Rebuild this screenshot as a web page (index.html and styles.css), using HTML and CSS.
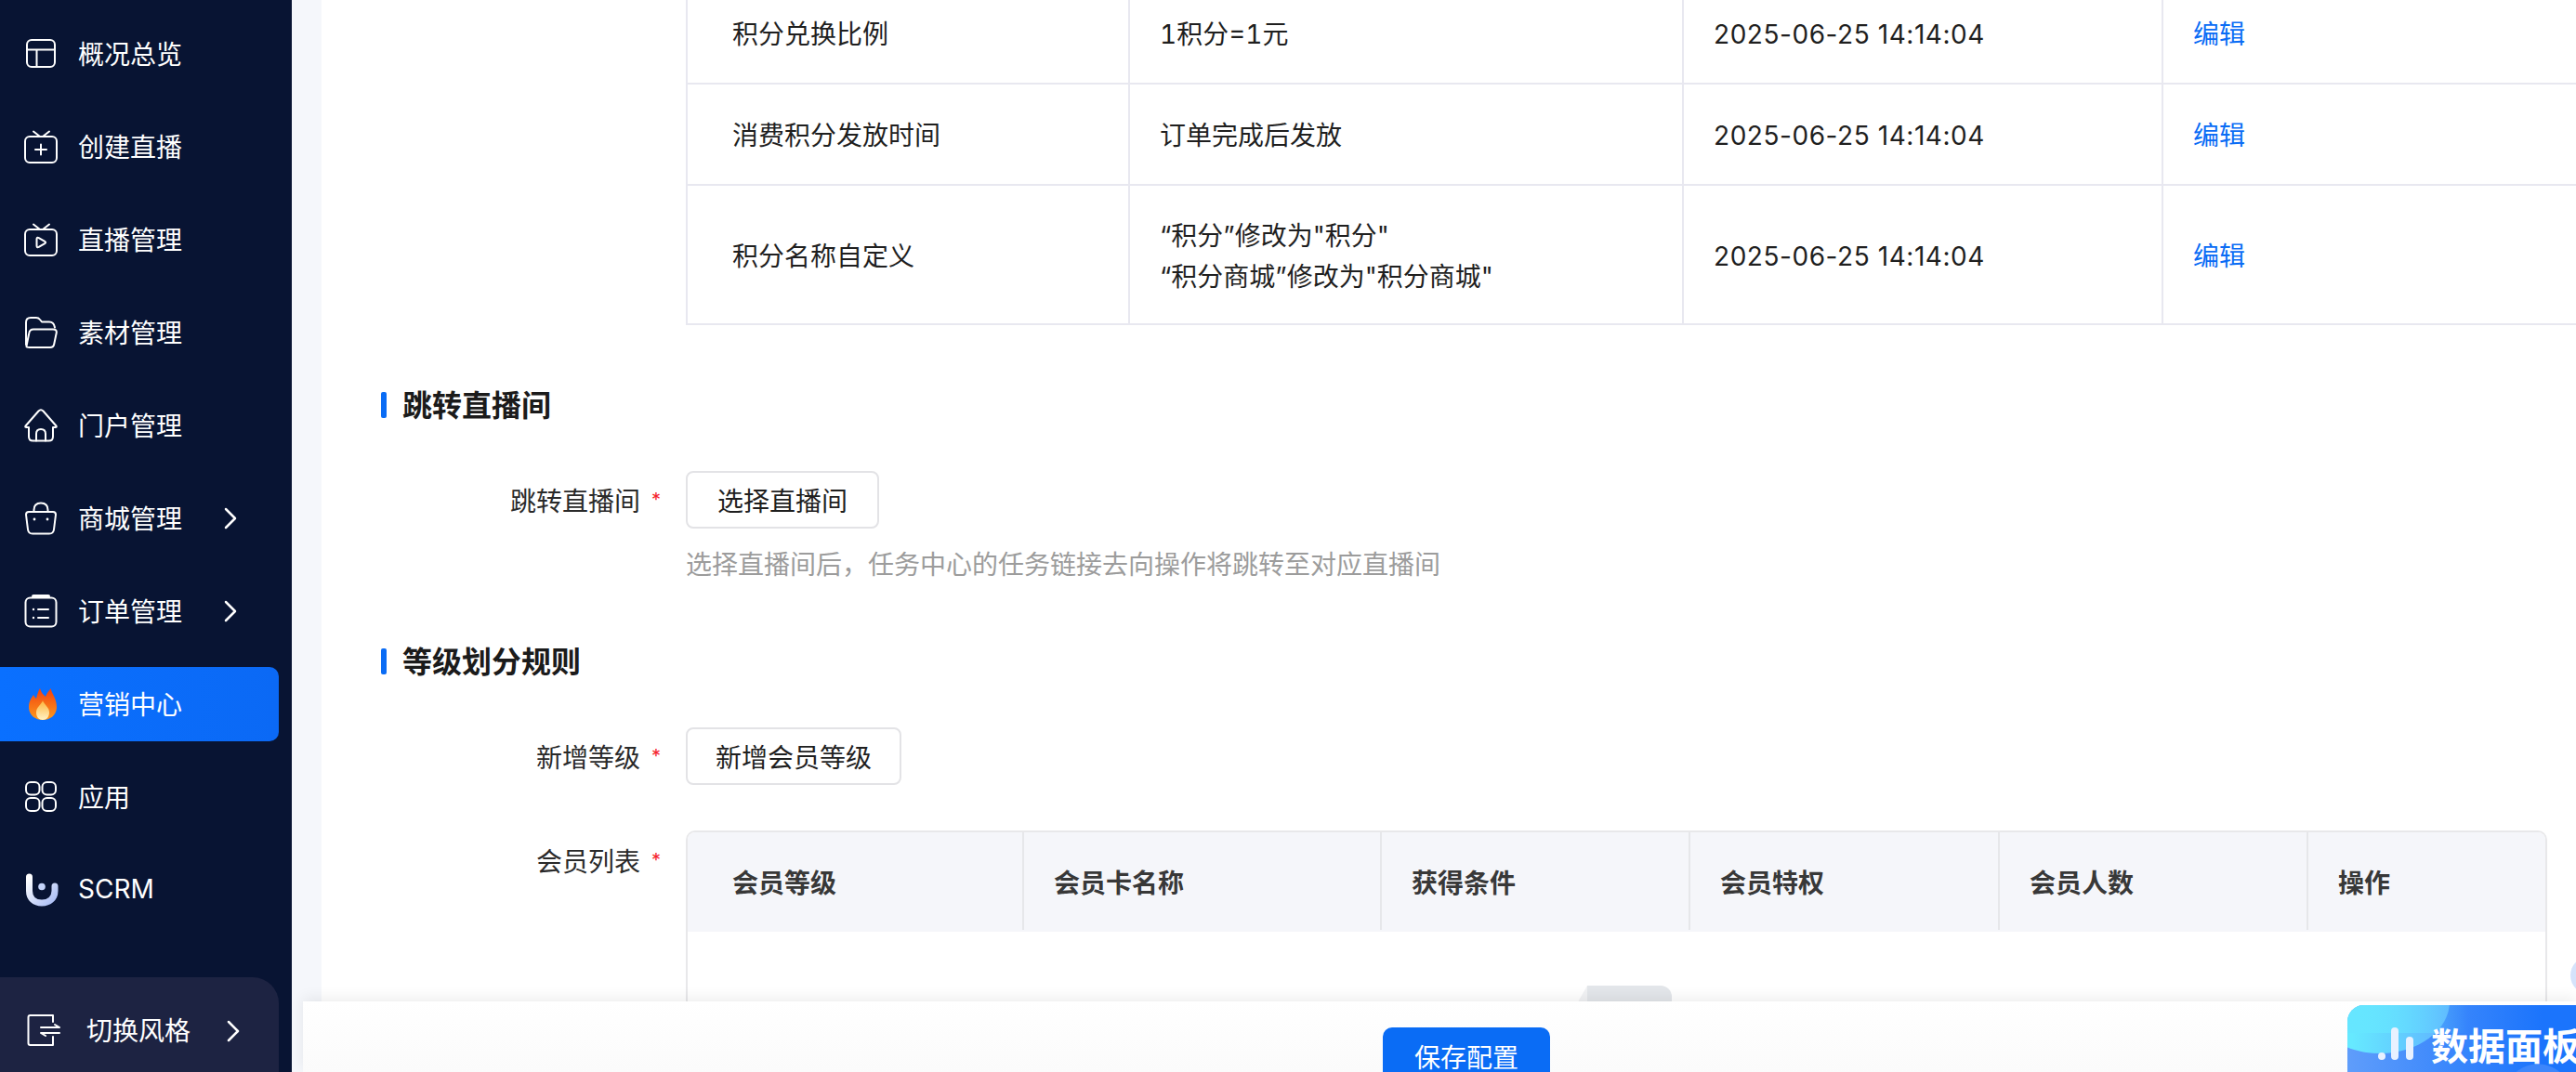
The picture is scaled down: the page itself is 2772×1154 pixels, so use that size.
FILE: index.html
```html
<!DOCTYPE html>
<html lang="zh-CN">
<head>
<meta charset="utf-8">
<title>营销中心</title>
<link rel="stylesheet" href="styles.css">
</head>
<body>
<div class="page">
  <aside class="sidebar">
    <nav class="nav">
      <a class="nav-item"><svg class="ico" viewBox="0 0 36 36"><rect x="3" y="3" width="30" height="29" rx="5"/><path d="M3 13.5h30M13.5 13.5V32"/></svg><span>概况总览</span></a>
      <a class="nav-item"><svg class="ico" viewBox="0 0 36 36"><rect x="1" y="7" width="34" height="28" rx="5"/><path d="M10 1.5l7 5.5M27 1.5l-7 5.5M12 21h12M18 15.5v11"/></svg><span>创建直播</span></a>
      <a class="nav-item"><svg class="ico" viewBox="0 0 36 36"><rect x="1" y="7" width="34" height="28" rx="5"/><path d="M10 1.5l7 5.5M27 1.5l-7 5.5"/><path d="M13.5 17.5q0-2.500 2.200-1.400l6.500 3.800q1.800 1.100 0 2.200l-6.500 3.800q-2.200 1.100-2.200-1.400z"/></svg><span>直播管理</span></a>
      <a class="nav-item"><svg class="ico" viewBox="0 0 36 36"><path d="M2 31V7q0-5 5-5h6q2.500 0 4 2l2 2.500h8q5 0 6 6"/><path d="M2.500 32.500l2.800-14q.7-4 4.700-4h21q4.500 0 3.700 4l-2.500 12q-.7 3.500-4.200 3.500H6q-4 0-3.500-1.500z"/></svg><span>素材管理</span></a>
      <a class="nav-item"><svg class="ico" viewBox="0 0 36 36"><path d="M1.500 18.500L15.500 2.500q2.500-2.500 5 0l14 16q.8 1.500-1 1.500H31v10q0 4.500-4.500 4.500h-17Q5 34.500 5 30V20H2.500q-1.800 0-1-1.500z"/><path d="M13 34.500V27q0-5 5-5t5 5v7.500"/></svg><span>门户管理</span></a>
      <a class="nav-item"><svg class="ico" viewBox="0 0 36 36"><path d="M5 11h26q3 0 3 3l-2 16q-.5 4.500-5 4.500H9q-4.500 0-5-4.500L2 14q0-3 3-3z"/><path d="M10.500 11V9q0-7.500 7.500-7.500T25.500 9v2"/><circle class="dot" cx="11" cy="19" r="1.400"/><circle class="dot" cx="25" cy="19" r="1.400"/></svg><span>商城管理</span><svg class="chev" viewBox="0 0 14 24"><path d="M2 2l10 10L2 22"/></svg></a>
      <a class="nav-item"><svg class="ico" viewBox="0 0 36 36"><rect x="1.500" y="3.500" width="33" height="31" rx="5"/><path class="clip" d="M10 2h16"/><path d="M15 16h11M15 25h11"/><circle class="dot" cx="10" cy="16" r="1.200"/><circle class="dot" cx="10" cy="25" r="1.200"/></svg><span>订单管理</span><svg class="chev" viewBox="0 0 14 24"><path d="M2 2l10 10L2 22"/></svg></a>
      <a class="nav-item nav-active"><svg class="flame" viewBox="0 0 36 36"><defs><linearGradient id="fl1" x1="0" y1="0" x2="0" y2="1"><stop offset="0" stop-color="#f2400f"/><stop offset="1" stop-color="#fb9a1e"/></linearGradient><linearGradient id="fl2" x1="0" y1="0" x2="0" y2="1"><stop offset="0" stop-color="#fdb43a"/><stop offset="1" stop-color="#fff2c4"/></linearGradient></defs><path fill="url(#fl1)" d="M15 1c2 6 4 7 6 9 1-3 3-6 6-9-1 4 6 10 6 20 0 9-7 14-15 14S3 30 3 21C3 15 6 11 8 8c1 2 2 3 3 4 1-4 2-8 4-11z"/><path fill="url(#fl2)" d="M18 14c1 4 7 7 7 13 0 5-3 8-7 8s-7-3-7-8c0-6 6-9 7-13z"/></svg><span>营销中心</span></a>
      <a class="nav-item"><svg class="ico" viewBox="0 0 36 36"><rect x="2" y="2" width="14.500" height="13.500" rx="5"/><rect x="19.500" y="2" width="14.500" height="13.500" rx="5"/><rect x="2" y="19" width="14.500" height="14" rx="5"/><rect x="19.500" y="19" width="14.500" height="14" rx="5"/></svg><span>应用</span></a>
      <a class="nav-item"><svg class="logo" viewBox="0 0 36 36"><defs><linearGradient id="ug" x1="0" y1="0" x2="1" y2="1"><stop offset="0" stop-color="#ffffff"/><stop offset="1" stop-color="#a9bdf5"/></linearGradient></defs><path fill="none" stroke="url(#ug)" stroke-width="7" stroke-linecap="round" d="M4.500 4v15c0 8 5.500 13 13.500 13s14-5 14-13v-5"/><circle cx="18" cy="14.500" r="3.800" fill="#c4d4fa"/></svg><span>SCRM</span></a>
    </nav>
    <div class="switch">
      <svg class="ico" viewBox="0 0 36 36"><path d="M28 2H3.500Q1.500 2 1.500 4v28q0 2 2 2H28v-9M28 2v7"/><path d="M15 15h20l-5-3M35 21H15l5 3"/></svg>
      <span>切换风格</span>
      <svg class="chev" viewBox="0 0 14 24"><path d="M2 2l10 10L2 22"/></svg>
    </div>
  </aside>

  <main class="main">
    <div class="content">
      <div class="points">
        <div class="points-row">
          <div class="cell">积分兑换比例</div><div class="cell ratio">1积分=1元</div><div class="cell date">2025-06-25 14:14:04</div><div class="cell"><a class="link">编辑</a></div>
        </div>
        <div class="points-row">
          <div class="cell">消费积分发放时间</div><div class="cell">订单完成后发放</div><div class="cell date">2025-06-25 14:14:04</div><div class="cell"><a class="link">编辑</a></div>
        </div>
        <div class="points-row points-row-tall">
          <div class="cell">积分名称自定义</div><div class="cell"><p class="line">“积分”修改为"积分"</p><p class="line">“积分商城”修改为"积分商城"</p></div><div class="cell date">2025-06-25 14:14:04</div><div class="cell"><a class="link">编辑</a></div>
        </div>
      </div>

      <h2 class="section-title">跳转直播间</h2>
      <div class="form-row">
        <label class="form-label">跳转直播间<i class="star">*</i></label>
        <div class="form-body">
          <button class="btn btn-short">选择直播间</button>
          <p class="hint">选择直播间后，任务中心的任务链接去向操作将跳转至对应直播间</p>
        </div>
      </div>

      <h2 class="section-title">等级划分规则</h2>
      <div class="form-row">
        <label class="form-label">新增等级<i class="star">*</i></label>
        <div class="form-body"><button class="btn btn-long">新增会员等级</button></div>
      </div>
      <div class="form-row form-row-list">
        <label class="form-label form-label-list">会员列表<i class="star">*</i></label>
        <div class="form-body">
          <div class="members">
            <div class="members-head">
              <div class="th">会员等级</div><div class="th">会员卡名称</div><div class="th">获得条件</div><div class="th">会员特权</div><div class="th">会员人数</div><div class="th">操作</div>
            </div>
            <div class="members-body"><div class="empty"></div></div>
          </div>
        </div>
      </div>
    </div>
  </main>

  <div class="float-dot"></div>
  <div class="save-bar">
    <button class="save">保存配置</button>
    <div class="board">
      <svg class="board-ico" viewBox="0 0 42 38"><rect x="1" y="28" width="8" height="8" rx="4"/><rect x="15" y="1" width="8" height="35" rx="4"/><rect x="31" y="11" width="8" height="25" rx="4"/></svg>
      <span>数据面板</span>
    </div>
  </div>
</div>
</body>
</html>
```
FILE: styles.css
```css
* { box-sizing: border-box; }
html, body { margin: 0; padding: 0; }
body {
  font-family: Inter, "Noto Sans CJK SC", sans-serif;
  font-size: 28px;
  color: #1f1f1f;
  background: #f5f7fb;
}
p, h2 { margin: 0; }

.page {
  position: relative;
  display: flex;
  width: 2772px;
  height: 1154px;
  overflow: hidden;
}

/* sidebar */
.sidebar {
  flex: 0 0 314px;
  display: flex;
  flex-direction: column;
  background: #081433;
  color: #fff;
}
.nav {
  display: flex;
  flex-direction: column;
  gap: 20px;
  padding-top: 18px;
}
.nav-item {
  display: flex;
  align-items: center;
  width: 300px;
  height: 80px;
  padding-left: 26px;
  border-radius: 0 10px 10px 0;
}
.nav-item > span { margin-left: 22px; margin-top: -3px; }
.nav-active { background: linear-gradient(90deg, #0a70ff, #0b69f5); }
.ico, .flame, .logo { flex: none; width: 36px; height: 36px; }
.ico { fill: none; stroke: #fff; stroke-width: 2; stroke-linecap: round; stroke-linejoin: round; }
.ico .dot { fill: #fff; stroke: none; }
.ico .clip { stroke-width: 4; }
.flame { margin-left: 2px; margin-right: -2px; }
.logo { margin-left: 1px; margin-right: -1px; }
.chev {
  flex: none;
  width: 14px;
  height: 24px;
  margin-left: 45px;
  fill: none;
  stroke: #fff;
  stroke-width: 2.500;
  stroke-linecap: round;
  stroke-linejoin: round;
}
.switch {
  display: flex;
  align-items: flex-start;
  width: 300px;
  height: 102px;
  margin-top: auto;
  padding: 39px 0 0 29px;
  border-radius: 0 28px 0 0;
  background: #1d2342;
}
.switch > span { margin-left: 28px; line-height: 38px; }
.switch .chev { margin: 7px 0 0 39px; }

/* main */
.main {
  flex: 1;
  min-width: 0;
  padding-left: 32px;
  overflow: hidden;
}
.content {
  height: 100%;
  padding: 0 31px 0 64px;
  background: #fff;
}

/* points table */
.points {
  width: 2100px;
  margin: -18px 0 0 328px;
  border-left: 2px solid #e8e8f0;
}
.points-row {
  display: grid;
  grid-template-columns: 476px 596px 516px 1fr;
  height: 109px;
  border-bottom: 2px solid #e8e8f0;
}
.points-row-tall { height: 150px; }
.cell {
  display: flex;
  flex-direction: column;
  justify-content: center;
  padding: 3px 0 0 32px;
  border-right: 2px solid #e8e8f0;
  line-height: 44px;
  white-space: nowrap;
}
.cell:first-child { padding-left: 48px; }
.cell:last-child { border-right: 0; }
.date { letter-spacing: .55px; }
.ratio { font-variant-numeric: tabular-nums; }
.link { color: #0a6cf5; }

/* sections */
.section-title {
  position: relative;
  margin-top: 65px;
  padding-left: 23px;
  font-size: 32px;
  font-weight: 700;
  line-height: 44px;
  color: #1b1b1b;
}
.section-title::before {
  content: "";
  position: absolute;
  left: 0;
  top: 7px;
  width: 6px;
  height: 28px;
  border-radius: 2px;
  background: #0a6cf5;
}

/* form */
.form-row {
  display: grid;
  grid-template-columns: 328px 1fr;
  margin-top: 48px;
}
.form-row-list { margin-top: 49px; }
.form-label {
  display: flex;
  align-items: center;
  justify-content: flex-end;
  height: 62px;
  padding-right: 27px;
  color: #2a2a2a;
}
.form-label-list { height: 64px; }
.star {
  margin-left: 12px;
  font-size: 20px;
  font-style: normal;
  color: #f5222d;
}
.btn {
  display: flex;
  align-items: center;
  justify-content: center;
  height: 62px;
  padding: 0;
  border: 2px solid #e3e3e6;
  border-radius: 8px;
  background: #fff;
  font: inherit;
  color: #1f1f1f;
}
.btn-short { width: 208px; }
.btn-long { width: 232px; }
.hint {
  margin: 19px 0 -2px;
  line-height: 40px;
  color: #9c9c9c;
}

/* member table */
.members {
  border: 2px solid #e8e8ea;
  border-bottom: 0;
  border-radius: 10px 10px 0 0;
  overflow: hidden;
}
.members-head {
  display: grid;
  grid-template-columns: 362px 385px 332px 333px 332px 1fr;
  height: 107px;
  background: #f5f6fa;
}
.th {
  display: flex;
  align-items: center;
  height: 105px;
  padding-left: 32px;
  border-right: 2px solid #e6e7ea;
  font-weight: 700;
  color: #383838;
}
.th:first-child { padding-left: 48px; }
.th:last-child { border-right: 0; }
.members-body {
  position: relative;
  height: 300px;
}
.empty {
  position: absolute;
  left: 968px;
  top: 58px;
  width: 91px;
  height: 60px;
  border-radius: 0 12px 0 0;
  background: #e3e6ea;
}
.empty::before {
  content: "";
  position: absolute;
  left: -17px;
  top: 0;
  width: 0;
  height: 0;
  border-right: 17px solid #f1f2f4;
  border-top: 30px solid transparent;
}

/* overlays */
.float-dot {
  position: absolute;
  left: 2766px;
  top: 1030px;
  width: 40px;
  height: 40px;
  border-radius: 50%;
  background: #d5e3fb;
}
.save-bar {
  position: absolute;
  left: 326px;
  right: 0;
  top: 1078px;
  bottom: 0;
  background: linear-gradient(180deg, #fff, #fbfbfb);
  box-shadow: 0 -4px 14px rgba(0, 0, 0, .07);
}
.save {
  position: absolute;
  left: 1162px;
  top: 28px;
  width: 180px;
  height: 62px;
  padding: 0;
  border: 0;
  border-radius: 10px;
  background: #0a6cf5;
  font: inherit;
  color: #fff;
}
.board {
  position: absolute;
  left: 2200px;
  top: 4px;
  display: flex;
  align-items: center;
  width: 300px;
  height: 100px;
  padding: 0 0 16px 32px;
  border-radius: 18px 0 0 0;
  overflow: hidden;
  background:
    radial-gradient(circle at 205px 100px, #3d86fb 0 36px, transparent 37px),
    linear-gradient(90deg, #5f9dfb 0%, #1b74fc 70%);
  color: #fff;
  font-size: 40px;
  font-weight: 700;
}
.board::before {
  content: "";
  position: absolute;
  left: -40px;
  top: -60px;
  width: 150px;
  height: 112px;
  border-radius: 50%;
  background: linear-gradient(90deg, #66e9ff 30%, #5fb3ff 100%);
}
.board::after {
  content: "";
  position: absolute;
  left: 0;
  top: 0;
  width: 130px;
  height: 30px;
  background: linear-gradient(90deg, #66e6ff, rgba(95, 170, 255, 0));
}
.board-ico {
  position: relative;
  z-index: 1;
  flex: none;
  width: 42px;
  height: 38px;
  fill: #e8f1ff;
}
.board span {
  position: relative;
  z-index: 1;
  margin-left: 16px;
  white-space: nowrap;
}
```
